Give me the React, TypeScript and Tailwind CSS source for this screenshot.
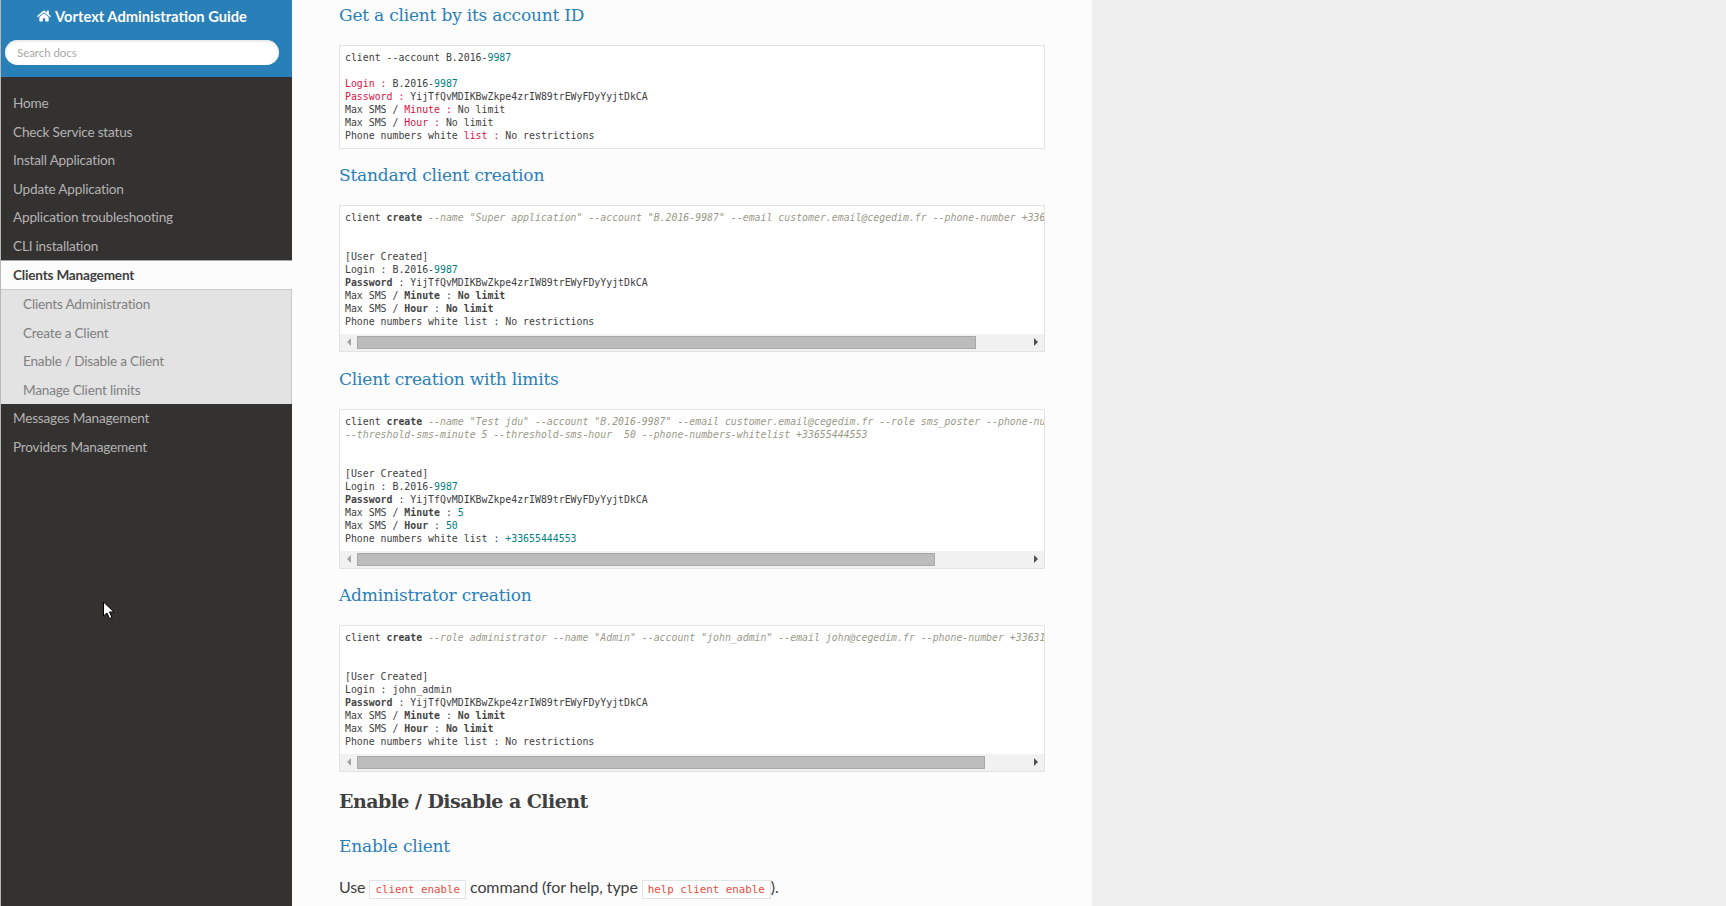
import React from "react";
import { FaHome } from "react-icons/fa";

const MONO = "font-['DejaVu_Sans_Mono',monospace]";
const SLAB = "font-['DejaVu_Serif',serif]";

const mainLinks = ["Home", "Check Service status", "Install Application", "Update Application", "Application troubleshooting", "CLI installation"];
const subLinks = ["Clients Administration", "Create a Client", "Enable / Disable a Client", "Manage Client limits"];
const PASSWORD = "YijTfQvMDIKBwZkpe4zrIW89trEWyFDyYyjtDkCA";

const K = ({ children }: { children: React.ReactNode }) => <span className="font-bold text-[#444]">{children}</span>;
const N = ({ children }: { children: React.ReactNode }) => <span className="text-[#008080]">{children}</span>;
const R = ({ children }: { children: React.ReactNode }) => <span className="text-[#dd1144]">{children}</span>;
const O = ({ children }: { children: React.ReactNode }) => <span className="italic text-[#999988]">{children}</span>;

function SideLink({ label }: { label: string }) {
  return <a className="block h-[28.5px] pl-[12px] leading-[28.5px] text-[#b3b3b3]">{label}</a>;
}

function Heading({ children, className }: { children: React.ReactNode; className: string }) {
  return <h3 className={`${SLAB} h-[30px] text-[17px] leading-[30px] font-normal tracking-[-0.2px] text-[#2980b9] ${className}`}>{children}</h3>;
}

// fake classic scrollbar, the headless one doesn't look like the screenshot
function Scrollbar({ thumb }: { thumb: string }) {
  return (
    <div className="flex h-[17px] items-center bg-[#f1f1f1]">
      <div className="flex w-[17px] shrink-0 justify-center">
        <div className="h-0 w-0 border-y-[4px] border-r-[4px] border-y-transparent border-r-[#a3a3a3]" />
      </div>
      <div className="min-w-0 flex-1">
        <div className={`h-[13px] border border-[#a8a8a8] bg-[#bcbcbc] ${thumb}`} />
      </div>
      <div className="flex w-[17px] shrink-0 justify-center">
        <div className="h-0 w-0 border-y-[4px] border-l-[4px] border-y-transparent border-l-[#505050]" />
      </div>
    </div>
  );
}

function CodeBox({ children, thumb }: { children: React.ReactNode; thumb?: string }) {
  return (
    <div className="border border-[#e1e4e5] bg-white">
      <pre className={`${MONO} overflow-hidden whitespace-pre px-[5px] pt-[5px] pb-[5.5px] text-[9.87px] leading-[13px] text-[#404040]`}>{children}</pre>
      {thumb && <Scrollbar thumb={thumb} />}
    </div>
  );
}

function InlineCode({ children }: { children: string }) {
  return (
    <code className={`${MONO} border border-[#e1e4e5] bg-white px-[5px] py-[2px] text-[10.8px] tracking-normal text-[#e74c3c]`}>{children}</code>
  );
}

function CreatedLimits() {
  return (
    <>
      {"Max SMS / "}<K>Minute</K>{" : "}<K>No limit</K>{"\n"}
      {"Max SMS / "}<K>Hour</K>{" : "}<K>No limit</K>{"\n"}
      {"Phone numbers white list : No restrictions"}
    </>
  );
}

function Sidebar() {
  return (
    <nav className="flex h-full w-[292px] shrink-0 flex-col border-l border-[#b8b8b8] bg-[#343131] font-['Lato',sans-serif] text-[13.6px] tracking-[-0.2px]">
      <div className="flex h-[77px] flex-col items-center bg-[#2980b9] pt-[6px] pr-[9px]">
        <div className="flex h-[20px] items-center gap-1 text-[14.7px] font-bold tracking-normal text-[#fcfcfc]">
          <FaHome className="h-[14px] w-[14px]" />
          <span>Vortext Administration Guide</span>
        </div>
        <div className="mt-[14px] flex h-[25px] w-[274px] items-center rounded-full bg-white pl-[12px] text-[11.6px] tracking-[-0.1px] text-[#a9a9a9] shadow-[inset_0_1px_3px_#ddd]">
          Search docs
        </div>
      </div>
      <div className="pt-[12px]">
        {mainLinks.map((label) => (
          <SideLink key={label} label={label} />
        ))}
      </div>
      <div className="flex h-[29px] items-center border-t border-[#a8a8a8] bg-[#fcfcfc] pl-[12px] font-bold text-[#404040]">
        Clients Management
      </div>
      <ul className="border-t border-r border-[#c9c9c9] bg-[#e3e3e3] text-[#808080]">
        {subLinks.map((label) => (
          <li key={label} className="h-[28.5px] pl-[22px] leading-[28.5px]">{label}</li>
        ))}
      </ul>
      <SideLink label="Messages Management" />
      <SideLink label="Providers Management" />
    </nav>
  );
}

export default function App() {
  return (
    <div className="relative flex h-[906px] overflow-hidden bg-[#efefef]">
      <Sidebar />
      <main className="h-full w-[800px] shrink-0 bg-[#fcfcfc] px-[47px] font-['Lato',sans-serif] text-[#404040]">
        <Heading className="mb-[15px]">Get a client by its account ID</Heading>
        <CodeBox>
          {"client --account B.2016-"}<N>9987</N>{"\n\n"}
          <R>Login :</R>{" B.2016-"}<N>9987</N>{"\n"}
          <R>Password :</R>{" " + PASSWORD + "\n"}
          {"Max SMS / "}<R>Minute :</R>{" No limit\n"}
          {"Max SMS / "}<R>Hour :</R>{" No limit\n"}
          {"Phone numbers white "}<R>list :</R>{" No restrictions"}
        </CodeBox>

        <Heading className="mt-[11.5px] mb-[15px]">Standard client creation</Heading>
        <CodeBox thumb="w-[619px]">
          {"client "}<K>create</K>{" "}
          <O>--name "Super application" --account "B.2016-9987" --email customer.email@cegedim.fr --phone-number +33655444553</O>{"\n\n\n"}
          {"[User Created]\nLogin : B.2016-"}<N>9987</N>{"\n"}
          <K>Password</K>{" : " + PASSWORD + "\n"}
          <CreatedLimits />
        </CodeBox>

        <Heading className="mt-[12.5px] mb-[15px]">Client creation with limits</Heading>
        <CodeBox thumb="w-[578px]">
          {"client "}<K>create</K>{" "}
          <O>--name "Test jdu" --account "B.2016-9987" --email customer.email@cegedim.fr --role sms_poster --phone-number +33655444553</O>{"\n"}
          <O>--threshold-sms-minute 5 --threshold-sms-hour  50 --phone-numbers-whitelist +33655444553</O>{"\n\n\n"}
          {"[User Created]\nLogin : B.2016-"}<N>9987</N>{"\n"}
          <K>Password</K>{" : " + PASSWORD + "\n"}
          {"Max SMS / "}<K>Minute</K>{" : "}<N>5</N>{"\n"}
          {"Max SMS / "}<K>Hour</K>{" : "}<N>50</N>{"\n"}
          {"Phone numbers white list : "}<N>+33655444553</N>
        </CodeBox>

        <Heading className="mt-[11.5px] mb-[15px]">Administrator creation</Heading>
        <CodeBox thumb="w-[628px]">
          {"client "}<K>create</K>{" "}
          <O>--role administrator --name "Admin" --account "john_admin" --email john@cegedim.fr --phone-number +33631234567</O>{"\n\n\n"}
          {"[User Created]\nLogin : john_admin\n"}
          <K>Password</K>{" : " + PASSWORD + "\n"}
          <CreatedLimits />
        </CodeBox>

        <h2 className={`${SLAB} mt-[13.5px] h-[32px] text-[19px] leading-[32px] font-bold tracking-[-0.55px] text-[#404040]`}>Enable / Disable a Client</h2>
        <Heading className="mt-[14px]">Enable client</Heading>
        <p className="mt-[14px] text-[16px] leading-[24px] tracking-[-0.1px]">
          Use <InlineCode>client enable</InlineCode> command (for help, type <InlineCode>help client enable</InlineCode>).
        </p>
      </main>

      {/* mouse pointer caught in the screenshot */}
      <svg className="absolute left-[102px] top-[601px]" width="13" height="19" viewBox="0 0 13 19">
        <path d="M1.5 1 L1.5 15 L5 12 L7.5 17.5 L10 16.5 L7.5 11 L12 11 Z" fill="#fff" stroke="#000" strokeWidth="1" />
      </svg>
    </div>
  );
}
